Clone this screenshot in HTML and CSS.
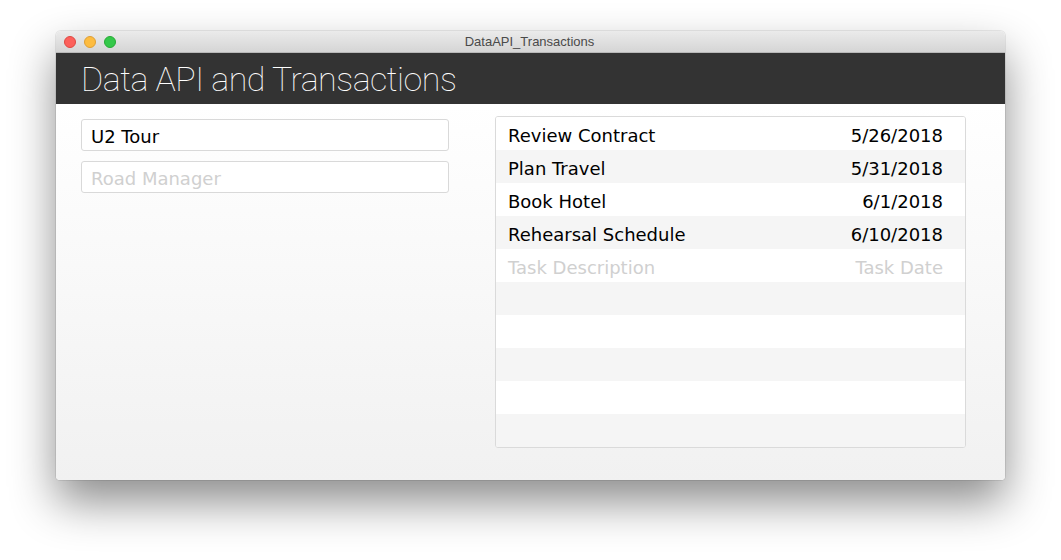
FILE: index.html
```html
<!DOCTYPE html>
<html>
<head>
<meta charset="utf-8">
<link rel="stylesheet" href="styles.css">
</head>
<body>
<div class="window">
  <div class="titlebar">
    <div class="lights">
      <span class="light red"></span>
      <span class="light yellow"></span>
      <span class="light green"></span>
    </div>
    <div class="wtitle">DataAPI_Transactions</div>
  </div>
  <div class="header">Data API and Transactions</div>
  <div class="content">
    <div class="left">
      <div class="field">U2 Tour</div>
      <div class="field placeholder">Road Manager</div>
    </div>
    <div class="table">
      <div class="row"><span>Review Contract</span><span>5/26/2018</span></div>
      <div class="row"><span>Plan Travel</span><span>5/31/2018</span></div>
      <div class="row"><span>Book Hotel</span><span>6/1/2018</span></div>
      <div class="row"><span>Rehearsal Schedule</span><span>6/10/2018</span></div>
      <div class="row placeholder"><span>Task Description</span><span>Task Date</span></div>
      <div class="row"></div>
      <div class="row"></div>
      <div class="row"></div>
      <div class="row"></div>
      <div class="row"></div>
    </div>
  </div>
</div>
</body>
</html>
```

FILE: styles.css
```css
html, body {
  margin: 0;
  padding: 0;
  background: #ffffff;
  width: 1061px;
  height: 560px;
  overflow: hidden;
}

.window {
  margin: 31px 0 0 56px;
  width: 949px;
  height: 449px;
  border-radius: 5px 5px 4px 4px;
  overflow: hidden;
  box-shadow: 0 0 0 1px rgba(0,0,0,0.08), 0 22px 45px rgba(0,0,0,0.45);
  display: flex;
  flex-direction: column;
  font-family: "DejaVu Sans", Verdana, sans-serif;
}

.titlebar {
  height: 22px;
  flex: none;
  background: linear-gradient(#ebebeb, #d5d5d5);
  border-bottom: 1px solid #b9b9b9;
  box-sizing: border-box;
  position: relative;
  display: flex;
  align-items: center;
  justify-content: center;
}

.lights {
  position: absolute;
  left: 8px;
  top: 5px;
  display: flex;
  gap: 8px;
}

.light {
  width: 12px;
  height: 12px;
  border-radius: 50%;
  box-sizing: border-box;
}
.red { background: #fc605b; border: 1px solid #de4841; }
.yellow { background: #fdbc40; border: 1px solid #de9f34; }
.green { background: #34c84a; border: 1px solid #27aa35; }

.wtitle {
  font-family: "Liberation Sans", Arial, sans-serif;
  font-size: 13px;
  color: #4a4a4a;
  margin-left: -2px;
}

.header {
  height: 51px;
  flex: none;
  background: #333333;
  color: #ffffff;
  font-family: Roboto, "Liberation Sans", sans-serif;
  font-weight: 100;
  font-size: 34px;
  line-height: 53px;
  padding-left: 25px;
  letter-spacing: -0.5px;
}

.content {
  flex: 1;
  background: linear-gradient(#ffffff, #f1f1f1);
  display: flex;
  align-items: flex-start;
  padding: 12px 0 0 25px;
  gap: 46px;
}

.left {
  width: 368px;
  display: flex;
  flex-direction: column;
  gap: 10px;
  padding-top: 3px;
}

.field {
  height: 32px;
  box-sizing: border-box;
  background: #ffffff;
  border: 1px solid #d9d9d9;
  border-radius: 3px;
  padding: 2px 0 0 9px;
  font-size: 18px;
  line-height: 30px;
  color: #000000;
}

.placeholder {
  color: #d0d0d0;
}

.table {
  width: 471px;
  box-sizing: border-box;
  border: 1px solid #dadada;
  border-radius: 3px;
  overflow: hidden;
  background: #ffffff;
}

.row {
  height: 33px;
  box-sizing: border-box;
  display: flex;
  justify-content: space-between;
  align-items: center;
  padding: 3px 22px 0 12px;
  font-size: 18px;
  color: #000000;
  background: #ffffff;
}

.row:nth-child(even) {
  background: #f5f5f5;
}

.row.placeholder {
  color: #d0d0d0;
}
```
